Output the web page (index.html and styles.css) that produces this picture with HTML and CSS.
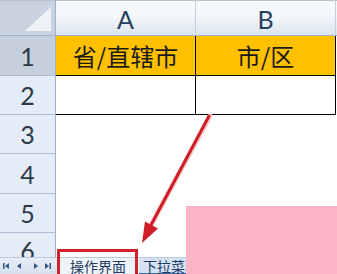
FILE: index.html
```html
<!DOCTYPE html>
<html>
<head>
<meta charset="utf-8">
<link rel="stylesheet" href="styles.css">
</head>
<body>
<div class="sheet">
  <div class="grid">
    <div class="corner"><span class="corner-tri"></span></div>
    <div class="colhead">A</div>
    <div class="colhead">B</div>
    <div class="colhead rest"></div>

    <div class="rowhead sel">1</div>
    <div class="cell yellow boxed">省/直辖市</div>
    <div class="cell yellow boxed">市/区</div>
    <div class="cell rest"></div>

    <div class="rowhead">2</div>
    <div class="cell boxed"></div>
    <div class="cell boxed"></div>
    <div class="cell rest"></div>

    <div class="rowhead">3</div>
    <div class="cell"></div>
    <div class="cell"></div>
    <div class="cell rest"></div>

    <div class="rowhead">4</div>
    <div class="cell"></div>
    <div class="cell"></div>
    <div class="cell rest"></div>

    <div class="rowhead">5</div>
    <div class="cell"></div>
    <div class="cell"></div>
    <div class="cell rest"></div>

    <div class="rowhead last">6</div>
    <div class="cell"></div>
    <div class="cell"></div>
    <div class="cell rest"></div>
  </div>

  <div class="tabbar">
    <div class="navs">
      <svg width="52" height="10" viewBox="0 0 52 10">
        <rect x="3" y="2" width="1.5" height="6" fill="#34578a"/>
        <polygon points="5,5 9,2 9,8" fill="#34578a"/>
        <polygon points="17,5 21,2 21,8" fill="#34578a"/>
        <polygon points="34,2 38,5 34,8" fill="#34578a"/>
        <polygon points="45,2 49,5 45,8" fill="#34578a"/>
        <rect x="49.5" y="2" width="1.5" height="6" fill="#34578a"/>
      </svg>
    </div>
    <div class="tab active">操作界面</div>
    <div class="tab">下拉菜单</div>
  </div>

  <div class="redbox"></div>
  <svg class="arrow" width="337" height="274" viewBox="0 0 337 274">
    <line x1="210" y1="116" x2="150" y2="227" stroke="#f3c9c9" stroke-width="5" stroke-linecap="round"/>
    <line x1="209" y1="116" x2="150" y2="227" stroke="#d01e26" stroke-width="3" stroke-linecap="round"/>
    <polygon points="142,243 145,221.5 158,228.5" fill="#d01e26"/>
  </svg>
  <div class="pink"></div>
</div>
</body>
</html>
```

FILE: styles.css
```css
html, body {
  margin: 0;
  padding: 0;
  background: #ffffff;
}

.sheet {
  position: relative;
  width: 337px;
  height: 274px;
  overflow: hidden;
  display: flex;
  flex-direction: column;
  font-family: Lato, "Open Sans", "Noto Sans CJK SC", sans-serif;
}

.grid {
  display: grid;
  grid-template-columns: 56px 140px 140px 1fr;
  grid-template-rows: 36px 40px 39px 39px 40px 39px 24px;
  height: 257px;
}

.grid > div {
  box-sizing: border-box;
}

.corner {
  position: relative;
  background: #c9d3df;
  border-right: 1px solid #9eb1c8;
  border-bottom: 1px solid #9eb1c8;
  border-top: 1px solid #b8c2ce;
}

.corner-tri {
  position: absolute;
  right: 4px;
  bottom: 4px;
  width: 0;
  height: 0;
  border-left: 26px solid transparent;
  border-bottom: 24px solid #eef2f7;
}

.colhead {
  background: linear-gradient(#f6f8fb, #f3f6fa 45%, #dde5ef);
  border-top: 1px solid #b8c2ce;
  border-right: 1px solid #c2cfdd;
  border-bottom: 1px solid #9eb1c8;
  color: #27405e;
  font-size: 25px;
  display: flex;
  align-items: center;
  justify-content: center;
  padding-top: 1px;
}

.colhead.rest {
  border-right: none;
}

.rowhead {
  background: #e4ecf7;
  border-right: 1px solid #9eb1c8;
  border-bottom: 1px solid #a9bcd3;
  color: #2d3a4a;
  font-size: 25px;
  display: flex;
  align-items: center;
  justify-content: center;
}

.rowhead.sel {
  background: #c6d0dc;
}

.rowhead.last {
  border-bottom: none;
  align-items: flex-start;
  padding-top: 2px;
}

.cell {
  background: #ffffff;
  display: flex;
  align-items: center;
  justify-content: center;
  font-family: "Noto Sans CJK SC", sans-serif;
  font-size: 24px;
  color: #1a1a1a;
}

.cell.yellow {
  background: #ffc000;
}

.cell.boxed {
  border-right: 1px solid #000000;
  border-bottom: 1px solid #000000;
}

.tabbar {
  height: 17px;
  background: linear-gradient(#e8eef6, #d6e1ee);
  border-top: 1px solid #b9c8da;
  box-sizing: border-box;
  display: flex;
  align-items: stretch;
}

.navs {
  width: 58px;
  display: flex;
  align-items: center;
  border-right: 1px solid #9eb1c8;
}

.tab {
  font-family: "Noto Sans CJK SC", sans-serif;
  font-size: 14px;
  line-height: 16px;
  color: #1d3b62;
}

.tab.active {
  background: #eef3f9;
  padding: 0 8px 0 11px;
  width: 80px;
  box-sizing: border-box;
}

.tab:not(.active) {
  padding: 0 8px 0 4px;
  border-bottom: 1px solid #3b6aa6;
  background: #d5e2f1;
}

.redbox {
  position: absolute;
  left: 57px;
  top: 249px;
  width: 81px;
  height: 30px;
  border: 3px solid #d0222b;
  box-sizing: border-box;
}

.arrow {
  position: absolute;
  left: 0;
  top: 0;
  pointer-events: none;
}

.pink {
  position: absolute;
  left: 186px;
  top: 206px;
  width: 151px;
  height: 68px;
  background: #fbb3c8;
}
```
